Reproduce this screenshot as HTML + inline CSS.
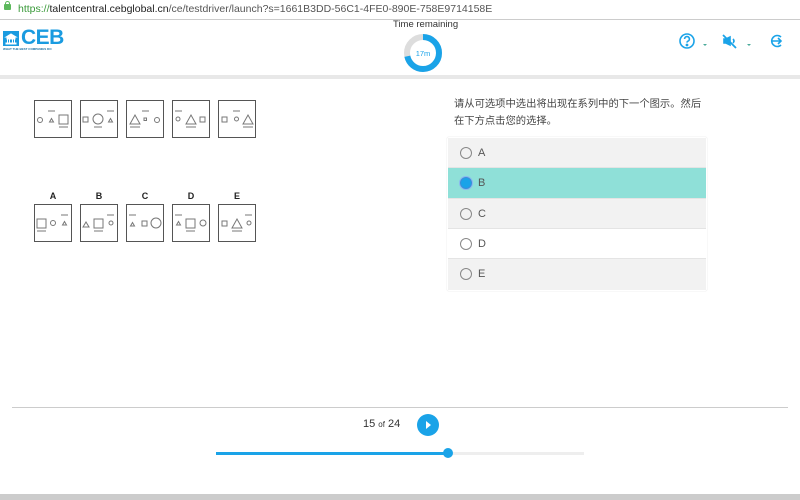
<!DOCTYPE html>
<html><head><meta charset="utf-8"><style>
body{margin:0;width:800px;height:500px;overflow:hidden;background:#fff;font-family:"Liberation Sans","Noto Sans CJK SC",sans-serif;position:relative}
.abs{position:absolute}
.url{top:0;left:0;width:800px;height:19px;border-bottom:1px solid #ccc;font-size:10.5px;line-height:18px;color:#555}
.url b{font-weight:normal;color:#222}
.opt{position:absolute;left:448px;width:258px;height:30px;font-size:11px;color:#555;line-height:30px;border-bottom:1px solid #e4e4e4;box-sizing:border-box}
.opt i{position:absolute;left:12px;top:9px;width:10px;height:10px;border:1px solid #888;border-radius:50%}
.opt span{position:absolute;left:30px}
</style></head><body>
<div class="abs url"><span style="position:absolute;left:4px;top:4px;width:7px;height:6px;background:#5cb85c;border-radius:1px"></span><span style="position:absolute;left:5px;top:1px;width:3px;height:4px;border:1px solid #5cb85c;border-bottom:none;border-radius:3px 3px 0 0"></span><span style="position:absolute;left:18px"><span style="color:#3a9a3a">https://</span><b>talentcentral.cebglobal.cn</b>/ce/testdriver/launch?s=1661B3DD-56C1-4FE0-890E-758E9714158E</span></div>
<div class="abs" style="top:75px;left:0;width:800px;height:4px;background:#e8e8e8"></div>
<!-- logo -->
<div class="abs" style="left:3px;top:31px;width:16px;height:15px;background:#1a9be0"></div>
<svg class="abs" style="left:3px;top:31px" width="16" height="15"><path d="M3 6 L8 3 L13 6 Z M4 7h8v1H4z M4.5 8.5v3M6.5 8.5v3M9.5 8.5v3M11.5 8.5v3 M3 12h10v1H3z" stroke="#fff" fill="#fff" stroke-width="1"/></svg>
<div class="abs" style="left:21px;top:26px;font-size:21px;font-weight:bold;color:#1a9be0;letter-spacing:-0.5px">CEB</div>
<div class="abs" style="left:3px;top:47px;font-size:3px;color:#1a6ea0;font-weight:bold">WHAT THE BEST COMPANIES DO</div>
<!-- timer -->
<div class="abs" style="left:393px;top:19px;font-size:9.5px;color:#333">Time remaining</div>
<svg class="abs" style="left:402px;top:32px" width="42" height="42"><circle cx="21" cy="21" r="16" fill="none" stroke="#ddd" stroke-width="6"/><circle cx="21" cy="21" r="16" fill="none" stroke="#1aa3e8" stroke-width="6" stroke-dasharray="72 100" transform="rotate(-90 21 21)"/><text x="21" y="24" font-size="7.5" text-anchor="middle" fill="#1aa3e8" font-family="Liberation Sans">17m</text></svg>
<!-- icons -->
<svg class="abs" style="left:676px;top:30px" width="120" height="24" fill="none" stroke="#1aa3e8" stroke-width="1.6">
<circle cx="11" cy="11" r="7"/><path d="M8.6 9a2.4 2.4 0 1 1 3.2 2.2c-.6.3-.8.7-.8 1.4" /><circle cx="11" cy="15" r=".6" fill="#1aa3e8"/>
<path d="M27 14l2 2 2-2z" fill="#4aaa9a" stroke="none"/>
<path d="M50 9l4-2v8l-4-2h-2v-4z M57 9q2 2 0 4" fill="#1aa3e8"/><path d="M47 5l13 13" stroke-width="1.8"/>
<path d="M71 14l2 2 2-2z" fill="#4aaa9a" stroke="none"/>
<path d="M105 7a5.5 5.5 0 1 0 0 8" /><path d="M96 11h8M102 8l3 3-3 3"/>
</svg>
<!-- puzzles -->
<svg class="abs" style="left:0;top:90px" width="280" height="160" fill="none" stroke="#777" stroke-width="1">
<g transform="translate(34,10)"><rect x=".5" y=".5" width="37" height="37" stroke="#555"/><circle cx="6" cy="20" r="2.5"/><path d="M14 11h7M15.5 22l2-3.5 2 3.5z"/><rect x="25" y="15" width="9" height="9"/><path d="M25 27h9"/></g>
<g transform="translate(80,10)"><rect x=".5" y=".5" width="37" height="37" stroke="#555"/><rect x="3" y="17" width="5" height="5"/><circle cx="18" cy="19" r="5"/><path d="M14 27h8M27 11h7M28.5 22l2-3.5 2 3.5z"/></g>
<g transform="translate(126,10)"><rect x=".5" y=".5" width="37" height="37" stroke="#555"/><path d="M4 24l5-9 5 9z M4 27h10 M16 11h7"/><rect x="18" y="18" width="2.5" height="2.5"/><circle cx="31" cy="20" r="2.5"/></g>
<g transform="translate(172,10)"><rect x=".5" y=".5" width="37" height="37" stroke="#555"/><path d="M3 11h7"/><circle cx="6" cy="19" r="2"/><path d="M14 24l5-9 5 9z M14 27h10"/><rect x="28" y="17" width="5" height="5"/></g>
<g transform="translate(218,10)"><rect x=".5" y=".5" width="37" height="37" stroke="#555"/><rect x="4" y="17" width="5" height="5"/><path d="M15 11h7"/><circle cx="18.5" cy="19" r="2"/><path d="M25 24l5-9 5 9z M25 27h10"/></g>
<g transform="translate(34,114)"><rect x=".5" y=".5" width="37" height="37" stroke="#555"/><rect x="3" y="15" width="9" height="9"/><path d="M3 27h9"/><circle cx="19" cy="19" r="2.5"/><path d="M27 11h7M28.5 21l2-3.5 2 3.5z"/></g>
<g transform="translate(80,114)"><rect x=".5" y=".5" width="37" height="37" stroke="#555"/><path d="M3 23l3-5 3 5z"/><rect x="14" y="15" width="9" height="9"/><path d="M14 27h9M27 11h7"/><circle cx="31" cy="19" r="2"/></g>
<g transform="translate(126,114)"><rect x=".5" y=".5" width="37" height="37" stroke="#555"/><path d="M3 11h7M4.5 22l2-3.5 2 3.5z"/><rect x="16" y="17" width="5" height="5"/><circle cx="30" cy="19" r="5"/></g>
<g transform="translate(172,114)"><rect x=".5" y=".5" width="37" height="37" stroke="#555"/><path d="M3 11h7M4.5 21l2-3.5 2 3.5z"/><rect x="14" y="15" width="9" height="9"/><path d="M14 27h9"/><circle cx="31" cy="19" r="3"/></g>
<g transform="translate(218,114)"><rect x=".5" y=".5" width="37" height="37" stroke="#555"/><rect x="4" y="17" width="5" height="5"/><path d="M14 24l5-9 5 9z M14 27h10 M27 11h7"/><circle cx="31" cy="19" r="2"/></g>
<g fill="#222" stroke="none" font-size="9" font-weight="bold" font-family="Liberation Sans" text-anchor="middle"><text x="53" y="109">A</text><text x="99" y="109">B</text><text x="145" y="109">C</text><text x="191" y="109">D</text><text x="237" y="109">E</text></g>
</svg>
<!-- question -->
<div class="abs" style="left:454px;top:96px;width:270px;font-size:10.3px;line-height:17px;color:#444">请从可选项中选出将出现在系列中的下一个图示。然后<br>在下方点击您的选择。</div>
<div class="abs" style="left:447px;top:137px;width:260px;height:154px;border-radius:2px;box-shadow:0 0 1px #ccc"></div>
<div class="opt" style="top:138px;background:#f2f2f2"><i></i><span>A</span></div>
<div class="opt" style="top:168px;background:#8fe0d8;height:31px"><i style="background:#1aa3e8;border-color:#3b8fd8;box-shadow:0 0 0 1px #8ab8f0"></i><span>B</span></div>
<div class="opt" style="top:199px;background:#f2f2f2"><i></i><span>C</span></div>
<div class="opt" style="top:229px;background:#fff"><i></i><span>D</span></div>
<div class="opt" style="top:259px;background:#f2f2f2;height:31px;border-bottom:none"><i></i><span>E</span></div>
<!-- footer -->
<div class="abs" style="left:12px;top:407px;width:776px;height:1px;background:#ccc"></div>
<div class="abs" style="left:363px;top:418px;font-size:11px;color:#333">15 <span style="font-size:8px">of</span> 24</div>
<svg class="abs" style="left:416px;top:413px" width="24" height="24"><circle cx="12" cy="12" r="11" fill="#1aa3e8"/><path d="M10 8l5 4-5 4z" fill="#fff"/></svg>
<div class="abs" style="left:216px;top:452px;width:368px;height:3px;background:#eee"></div>
<div class="abs" style="left:216px;top:452px;width:232px;height:3px;background:#1aa3e8"></div>
<div class="abs" style="left:443px;top:448px;width:10px;height:10px;border-radius:50%;background:#1aa3e8"></div>
<div class="abs" style="left:0;top:494px;width:800px;height:6px;background:#ccc"></div>
</body></html>
